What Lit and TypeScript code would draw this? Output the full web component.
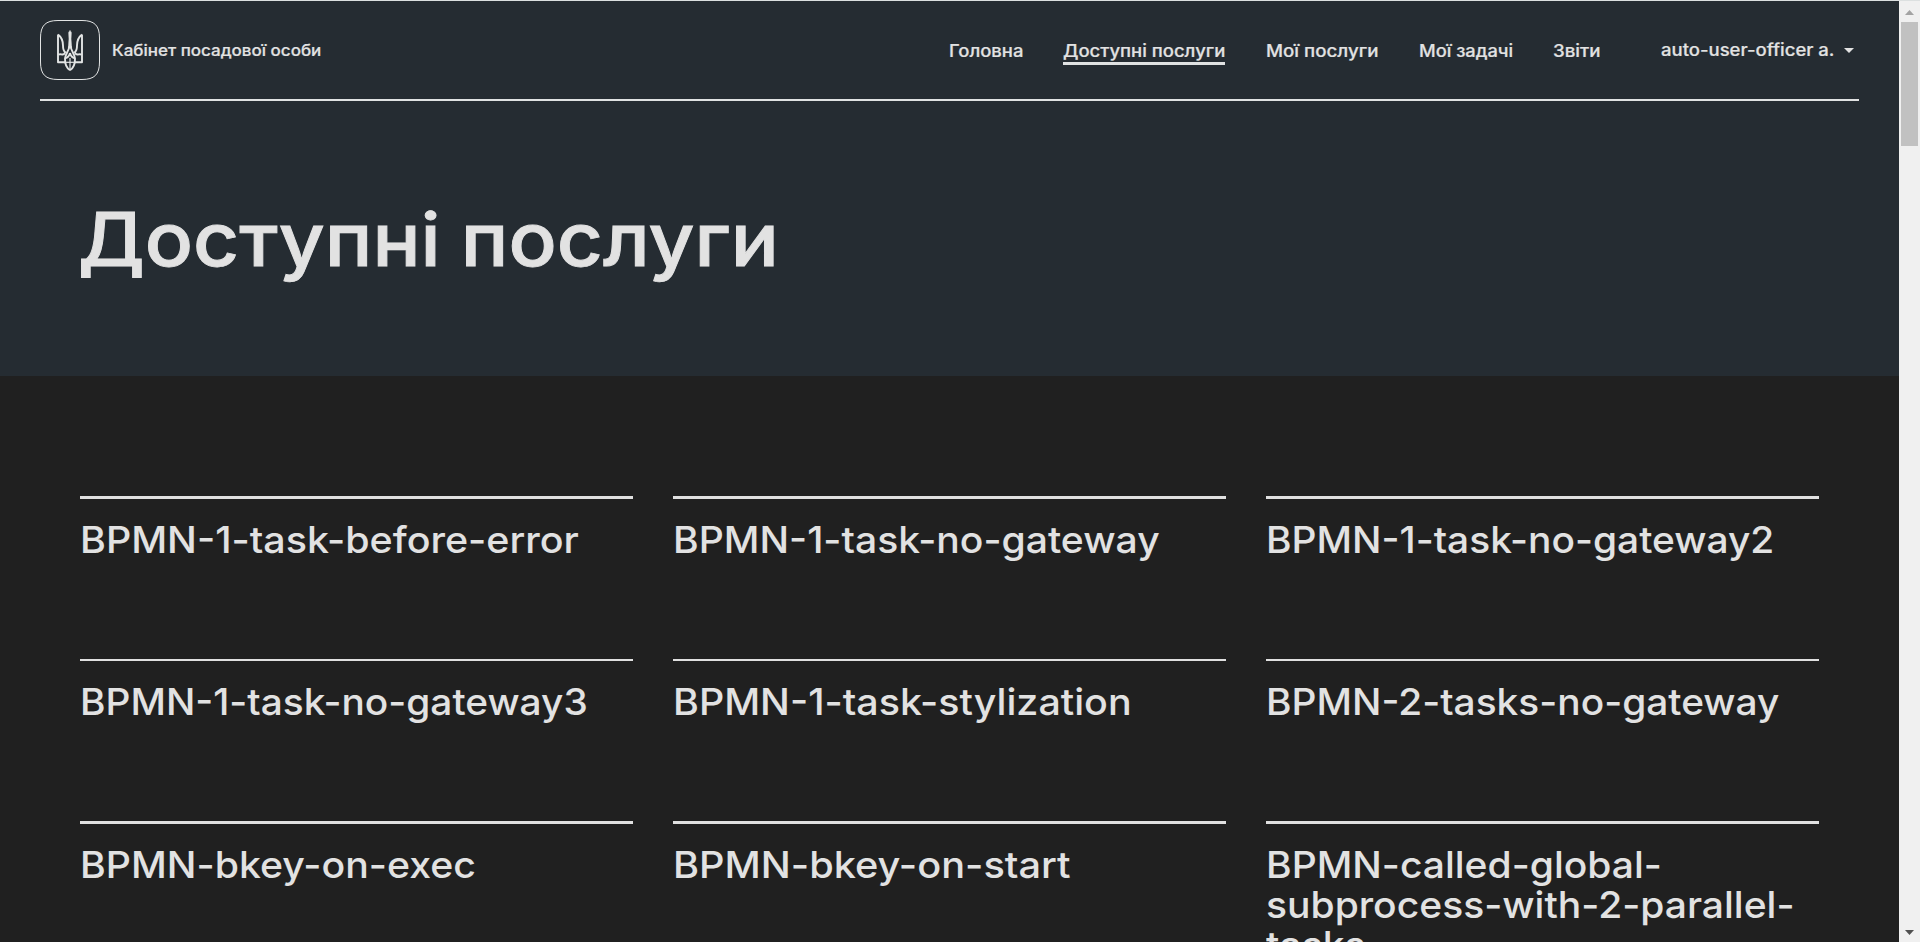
import { LitElement, html, svg, css } from "lit";
import { classMap } from "lit/directives/class-map.js";

interface Label {
  text: string;
  stretch: number;
}

const NAV: Label[] = [
  { text: "Головна", stretch: 1.085 },
  { text: "Доступні послуги", stretch: 1.087 },
  { text: "Мої послуги", stretch: 1.1 },
  { text: "Мої задачі", stretch: 1.075 },
  { text: "Звіти", stretch: 1.1 },
];

const SERVICES: Label[] = [
  { text: "BPMN-1-task-before-error", stretch: 1.065 },
  { text: "BPMN-1-task-no-gateway", stretch: 1.057 },
  { text: "BPMN-1-task-no-gateway2", stretch: 1.052 },
  { text: "BPMN-1-task-no-gateway3", stretch: 1.05 },
  { text: "BPMN-1-task-stylization", stretch: 1.065 },
  { text: "BPMN-2-tasks-no-gateway", stretch: 1.051 },
  { text: "BPMN-bkey-on-exec", stretch: 1.061 },
  { text: "BPMN-bkey-on-start", stretch: 1.073 },
  { text: "BPMN-called-global-subprocess-with-2-parallel-tasks", stretch: 1.055 },
];

class AppLogo extends LitElement {
  static styles = css`
    :host { display: block; width: 60px; height: 60px; }
    svg { display: block; }
  `;
  render() {
    const wing = svg`
      <path d="M18 14.4 V42.3 H26 M18 14.4 C21.6 17 23 21 23 25.5 C23 29.5 23.6 31 25.2 32.2 C24.4 34.4 22.8 34.8 21.4 34.4 C20.2 34 19.2 34.2 18 34.6"/>
      <path d="M29.4 26 C29 31 25.4 33.6 25 38.6 C24.9 44 27 48.5 30 50.2"/>
      <path d="M30 33 C29.4 36 27.4 37.8 25 38.4"/>`;
    return html`<svg width="60" height="60" viewBox="0 0 60 60" fill="none" stroke="#e2e4e4">
      <path d="M18 .5 H42 C54.5 .5 59.5 5.5 59.5 18 V42 C59.5 54.5 54.5 59.5 42 59.5 H18 C5.5 59.5 .5 54.5 .5 42 V18 C.5 5.5 5.5 .5 18 .5 Z" stroke-width="1" />
      <g stroke-width="1.9" stroke-linejoin="round">
        ${wing}
        <g transform="matrix(-1 0 0 1 60 0)">${wing}</g>
        <path d="M30 10.4 L31.3 12.5 L31 19 L31.6 28 H28.4 L29 19 L28.7 12.5 Z" fill="#e2e4e4" stroke-width=".6" />
        <path d="M30 38 V50" stroke-width="1.2" />
        <path d="M25 42.3 H35" stroke-width="1.2" />
      </g>
    </svg>`;
  }
}
customElements.define("app-logo", AppLogo);

class AppRoot extends LitElement {
  static styles = css`
    :host {
      display: flex; flex-direction: column; box-sizing: border-box; height: 942px; overflow: hidden;
      border-top: 1px solid #dce0e0; background: #202020; color: #e2e2e2;
      font-family: Inter, "Liberation Sans", sans-serif; font-weight: 500;
    }
    .window { display: flex; flex: 1; min-height: 0; }
    .page { flex: 1; min-width: 0; overflow: hidden; }
    .hero { background: #252c32; height: 375px; padding: 0 40px; box-sizing: border-box; }
    .header { display: flex; align-items: flex-start; height: 98px; border-bottom: 2px solid #e0e2e2; -webkit-text-stroke: 0.2px currentColor; }
    .wide { display: inline-block; transform-origin: 0 50%; }
    .brand { display: flex; align-items: center; gap: 12px; padding-top: 19px; flex: 1; }
    .brand-name { font-size: 16px; line-height: 20px; transform: scaleX(1.062); transform-origin: 0 50%; margin-top: -1px; }
    .nav { display: grid; grid-template-columns: 114px 203px 153px 134px 107px 199px; padding-top: 38px; font-size: 17px; line-height: 24px; white-space: nowrap; }
    .link { justify-self: start; height: 23px; border-bottom: 3px solid transparent; }
    .link.active { border-color: #e0e2e2; width: 162px; }
    .user { display: flex; align-items: center; height: 22px; }
    .user-name { width: 183px; padding-left: 1px; }
    .user-name .wide { transform: scaleX(1.089); }
    .caret { width: 10px; height: 5px; background: currentColor; clip-path: polygon(0 0, 100% 0, 50% 100%); margin-top: 1px; }
    h1 { margin: 0; padding: 93px 0 0 38px; font-size: 74px; line-height: 90px; font-weight: 500; white-space: nowrap; -webkit-text-stroke: 0.9px currentColor; }
    h1 .wide { transform: scaleX(1.08); word-spacing: -1px; }
    .services { display: grid; grid-template-columns: repeat(3, 553px); grid-auto-rows: 162.5px; column-gap: 40px; padding: 120px 80px 0; }
    .card { border-top: 3px solid #e0e0e0; padding: 21px 0 0 0.3px; font-size: 37px; line-height: 40px; }
    .card.thin { border-top-width: 2px; }
    .card .wide { width: 522px; }
    .scrollbar { width: 21px; background: #f0f0f0; display: flex; flex-direction: column; align-items: center; box-sizing: border-box; padding: 9px 0 7px; }
    .up { width: 9px; height: 5px; background: #a3a3a3; clip-path: polygon(50% 0, 100% 100%, 0 100%); }
    .down { width: 9px; height: 5px; background: #505050; clip-path: polygon(0 0, 100% 0, 50% 100%); }
    .thumb { width: 17px; height: 124px; background: #c1c1c1; margin: 7px 1px 0 0; }
    .track { flex: 1; }
  `;
  private wide(l: Label) {
    return html`<span class="wide" style="transform:scaleX(${l.stretch})">${l.text}</span>`;
  }
  render() {
    return html`<div class="window">
      <div class="page">
        <section class="hero">
          <header class="header">
            <div class="brand">
              <app-logo></app-logo>
              <span class="brand-name">Кабінет посадової особи</span>
            </div>
            <nav class="nav">
              ${NAV.map((n, i) => html`<a class=${classMap({ link: true, active: i === 1 })}>${this.wide(n)}</a>`)}
              <div class="user"><span class="user-name"><span class="wide">auto-user-officer a.</span></span><span class="caret"></span></div>
            </nav>
          </header>
          <h1><span class="wide">Доступні послуги</span></h1>
        </section>
        <main class="services">
          ${SERVICES.map((s, i) => html`<div class=${classMap({ card: true, thin: Math.floor(i / 3) === 1 })}>${this.wide(s)}</div>`)}
        </main>
      </div>
      <aside class="scrollbar">
        <span class="up"></span><span class="thumb"></span><span class="track"></span><span class="down"></span>
      </aside>
    </div>`;
  }
}
customElements.define("app-root", AppRoot);
